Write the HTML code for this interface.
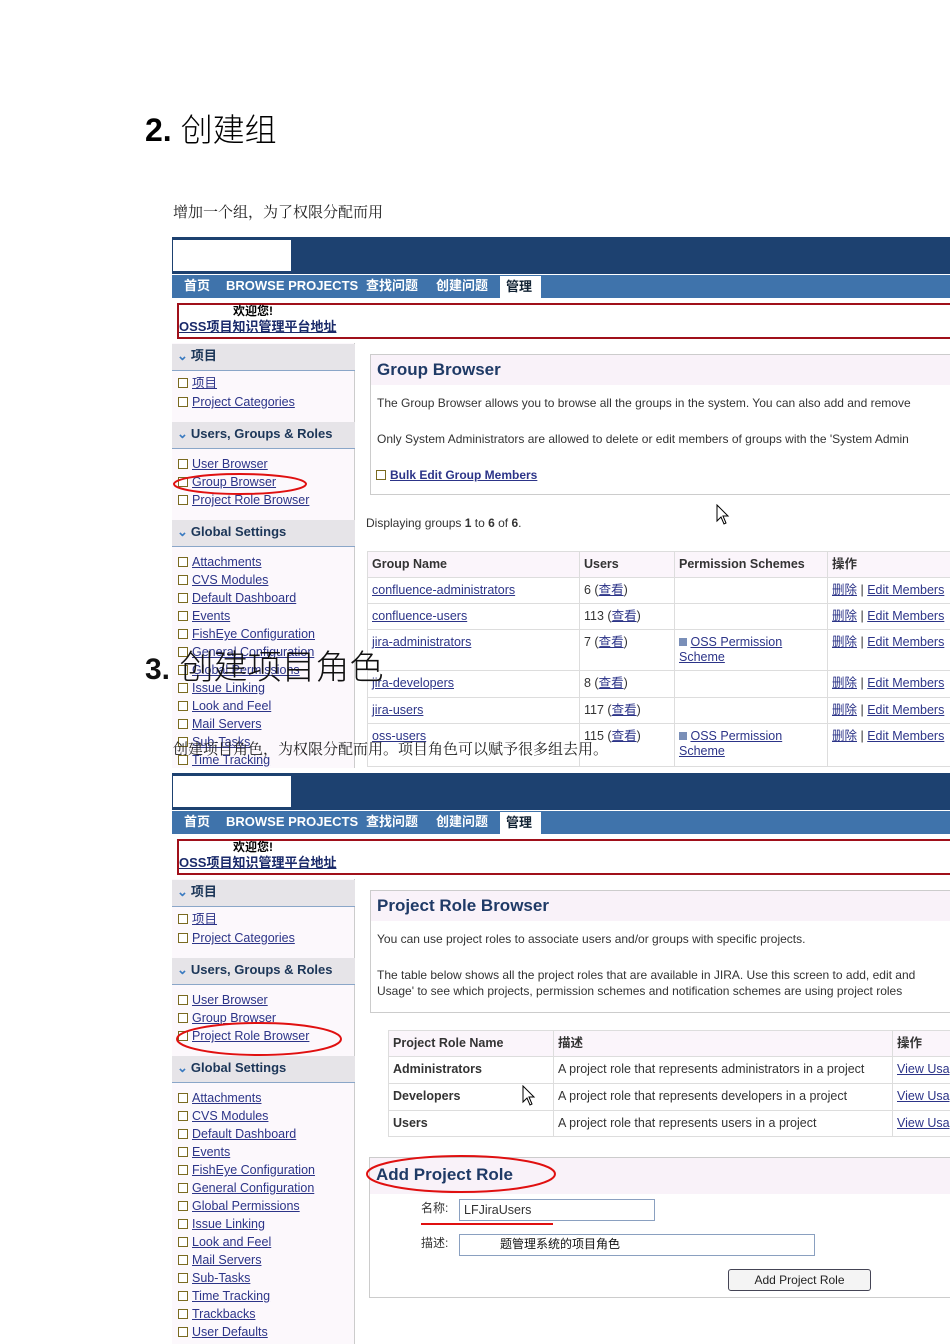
<!DOCTYPE html>
<html><head><meta charset="utf-8"><style>
*{margin:0;padding:0;box-sizing:border-box}
html,body{width:950px;height:1344px;overflow:hidden}
body{background:#fff;position:relative;font-family:"Liberation Sans","Noto Sans CJK SC",sans-serif}
.a{position:absolute;white-space:nowrap}
.shot{position:absolute;left:0;width:950px;overflow:hidden}
.top{position:absolute;left:172px;top:0;width:778px;height:37px;background:#1d4170}
.logo{position:absolute;left:173px;top:3px;width:118px;height:31px;background:#fff}
.nav{position:absolute;left:172px;top:38px;width:778px;height:23px;background:#3f73ab}
.nav span{position:absolute;top:3px;color:#fff;font-weight:bold;font-size:13px;line-height:16px}
.tab{position:absolute;left:500px;top:39px;width:41px;height:22px;background:#fff;color:#123;font-weight:bold;font-size:13px;line-height:16px;padding:3px 0 0 6px}
.red{position:absolute;left:177px;top:66px;width:780px;height:36px;border:2px solid #a0101a;background:#fff}
.side{position:absolute;left:172px;top:106px;width:183px;height:700px;background:#fcf8fc;border-right:1px solid #ccc}
.sh{position:absolute;left:172px;width:183px;height:27px;background:#e6e4e8;border-bottom:1px solid #8aa6c8;font-size:13px;line-height:16px;font-weight:bold;color:#1c3658;padding:4px 0 0 5px}
.sh:before{content:"⌄";color:#3a7ac0;margin-right:3px;font-size:13px}
.li{position:absolute;left:178px;font-size:12.5px;line-height:15px;color:#2c3488;text-decoration:underline}
.li:before{content:"";display:inline-block;width:8px;height:8px;border:1px solid #7a6a20;background:#fff;margin-right:4px;vertical-align:-1px}
.panel{position:absolute;border:1px solid #ccc;background:#fff}
.ttl{font-weight:bold;font-size:17px;color:#1f3a66}
.t{font-size:12px;color:#333}
table{position:absolute;border-collapse:collapse;font-size:12.5px;line-height:15px;color:#333}
td{border:1px solid #ddd;padding:5px 4px 0 4px;vertical-align:top}
th{border:1px solid #ddd;padding:5px 4px 0 4px;text-align:left;background:#fbf5fb;vertical-align:top}
.lk{color:#2c3488;text-decoration:underline}
.h2{font-size:34px;color:#111}
</style></head><body>

<div class="a" style="left:145px;top:108px;font-size:32px;line-height:44px"><b style="font-family:'Liberation Sans'">2.</b> <span style="font-weight:300">创建组</span></div>
<div class="a" style="left:173px;top:203px;font-size:15px;line-height:20px;font-family:'Liberation Serif','Noto Serif CJK SC',serif;color:#222">增加一个组，为了权限分配而用</div>

<!-- SHOT 1 -->
<div class="shot" style="top:237px;height:531px">
<div class="top"></div><div class="logo"></div>
<div class="nav"><span style="left:12px">首页</span><span style="left:54px">BROWSE PROJECTS</span><span style="left:194px">查找问题</span><span style="left:264px">创建问题</span></div>
<div class="tab">管理</div>
<div class="red"><div class="a" style="left:54px;top:-1px;font-size:12px;line-height:15px;font-weight:bold">欢迎您!</div><div class="a" style="left:0px;top:14px;font-size:13px;line-height:16px;font-weight:bold;color:#1a2a6a;text-decoration:underline">OSS项目知识管理平台地址</div></div>
<div class="side"></div>
<div class="sh" style="top:107px">项目</div>
<div class="li" style="top:139px">项目</div>
<div class="li" style="top:158px">Project Categories</div>
<div class="sh" style="top:185px">Users, Groups &amp; Roles</div>
<div class="li" style="top:220px">User Browser</div>
<div class="li" style="top:238px">Group Browser</div>
<div class="li" style="top:256px">Project Role Browser</div>
<div class="sh" style="top:283px">Global Settings</div>
<div class="li" style="top:318px">Attachments</div>
<div class="li" style="top:336px">CVS Modules</div>
<div class="li" style="top:354px">Default Dashboard</div>
<div class="li" style="top:372px">Events</div>
<div class="li" style="top:390px">FishEye Configuration</div>
<div class="li" style="top:408px">General Configuration</div>
<div class="li" style="top:426px">Global Permissions</div>
<div class="li" style="top:444px">Issue Linking</div>
<div class="li" style="top:462px">Look and Feel</div>
<div class="li" style="top:480px">Mail Servers</div>
<div class="li" style="top:498px">Sub-Tasks</div>
<div class="li" style="top:516px">Time Tracking</div>
<svg class="a" style="left:172px;top:234px" width="138" height="26"><ellipse cx="68" cy="13" rx="66" ry="10" fill="none" stroke="#e01010" stroke-width="2"/></svg>
<div class="panel" style="left:370px;top:117px;width:600px;height:141px">
<div style="background:#f9f2f9;height:30px;padding:5px 0 0 6px;line-height:20px" class="ttl">Group Browser</div>
<div class="a t" style="left:6px;top:41px">The Group Browser allows you to browse all the groups in the system. You can also add and remove</div>
<div class="a t" style="left:6px;top:77px">Only System Administrators are allowed to delete or edit members of groups with the 'System Admin</div>
<div class="a li" style="left:5px;top:113px;font-weight:bold;font-size:12px">Bulk Edit Group Members</div>
</div>
<div class="a t" style="left:366px;top:279px">Displaying groups <b>1</b> to <b>6</b> of <b>6</b>.</div>
<svg class="a" style="left:716px;top:267px" width="14" height="22"><path d="M1 1 L1 17 L5 13 L8 20 L10 19 L7 12 L12 12 Z" fill="#fff" stroke="#000"/></svg>
<table style="left:367px;top:314px;width:600px">
<tr style="height:26px"><th style="width:212px">Group Name</th><th style="width:95px">Users</th><th style="width:153px">Permission Schemes</th><th>操作</th></tr>
<tr style="height:26px"><td class="lk">confluence-administrators</td><td>6 (<span class="lk">查看</span>)</td><td></td><td><span class="lk">删除</span> | <span class="lk">Edit Members</span></td></tr>
<tr style="height:26px"><td class="lk">confluence-users</td><td>113 (<span class="lk">查看</span>)</td><td></td><td><span class="lk">删除</span> | <span class="lk">Edit Members</span></td></tr>
<tr style="height:41px"><td class="lk">jira-administrators</td><td>7 (<span class="lk">查看</span>)</td><td><span style="display:inline-block;width:8px;height:8px;background:#7a8fb8"></span> <span class="lk">OSS Permission<br>Scheme</span></td><td><span class="lk">删除</span> | <span class="lk">Edit Members</span></td></tr>
<tr style="height:27px"><td class="lk">jira-developers</td><td>8 (<span class="lk">查看</span>)</td><td></td><td><span class="lk">删除</span> | <span class="lk">Edit Members</span></td></tr>
<tr style="height:26px"><td class="lk">jira-users</td><td>117 (<span class="lk">查看</span>)</td><td></td><td><span class="lk">删除</span> | <span class="lk">Edit Members</span></td></tr>
<tr style="height:43px"><td class="lk">oss-users</td><td>115 (<span class="lk">查看</span>)</td><td><span style="display:inline-block;width:8px;height:8px;background:#7a8fb8"></span> <span class="lk">OSS Permission<br>Scheme</span></td><td><span class="lk">删除</span> | <span class="lk">Edit Members</span></td></tr>
</table>
</div>

<div class="a h2" style="left:145px;top:645px;line-height:46px"><b style="font-family:'Liberation Sans';font-size:30px">3.</b> <span style="font-weight:300">创建项目角色</span></div>
<div class="a" style="left:173px;top:740px;font-size:15px;line-height:20px;font-family:'Liberation Serif','Noto Serif CJK SC',serif;color:#222">创建项目角色，为权限分配而用。项目角色可以赋予很多组去用。</div>

<!-- SHOT 2 -->
<div class="shot" style="top:773px;height:571px">
<div class="top"></div><div class="logo"></div>
<div class="nav"><span style="left:12px">首页</span><span style="left:54px">BROWSE PROJECTS</span><span style="left:194px">查找问题</span><span style="left:264px">创建问题</span></div>
<div class="tab">管理</div>
<div class="red"><div class="a" style="left:54px;top:-1px;font-size:12px;line-height:15px;font-weight:bold">欢迎您!</div><div class="a" style="left:0px;top:14px;font-size:13px;line-height:16px;font-weight:bold;color:#1a2a6a;text-decoration:underline">OSS项目知识管理平台地址</div></div>
<div class="side"></div>
<div class="sh" style="top:107px">项目</div>
<div class="li" style="top:139px">项目</div>
<div class="li" style="top:158px">Project Categories</div>
<div class="sh" style="top:185px">Users, Groups &amp; Roles</div>
<div class="li" style="top:220px">User Browser</div>
<div class="li" style="top:238px">Group Browser</div>
<div class="li" style="top:256px">Project Role Browser</div>
<div class="sh" style="top:283px">Global Settings</div>
<div class="li" style="top:318px">Attachments</div>
<div class="li" style="top:336px">CVS Modules</div>
<div class="li" style="top:354px">Default Dashboard</div>
<div class="li" style="top:372px">Events</div>
<div class="li" style="top:390px">FishEye Configuration</div>
<div class="li" style="top:408px">General Configuration</div>
<div class="li" style="top:426px">Global Permissions</div>
<div class="li" style="top:444px">Issue Linking</div>
<div class="li" style="top:462px">Look and Feel</div>
<div class="li" style="top:480px">Mail Servers</div>
<div class="li" style="top:498px">Sub-Tasks</div>
<div class="li" style="top:516px">Time Tracking</div>
<div class="li" style="top:534px">Trackbacks</div>
<div class="li" style="top:552px">User Defaults</div>
<svg class="a" style="left:174px;top:247px" width="170" height="38"><ellipse cx="85" cy="19" rx="82" ry="16" fill="none" stroke="#e01010" stroke-width="2"/></svg>
<div class="panel" style="left:370px;top:117px;width:600px;height:123px">
<div style="background:#f9f2f9;height:30px;padding:5px 0 0 6px;line-height:20px" class="ttl">Project Role Browser</div>
<div class="a t" style="left:6px;top:41px">You can use project roles to associate users and/or groups with specific projects.</div>
<div class="a t" style="left:6px;top:77px">The table below shows all the project roles that are available in JIRA. Use this screen to add, edit and</div>
<div class="a t" style="left:6px;top:93px">Usage' to see which projects, permission schemes and notification schemes are using project roles</div>
</div>
<table style="left:388px;top:257px;width:600px">
<tr style="height:26px"><th style="width:165px">Project Role Name</th><th style="width:339px">描述</th><th>操作</th></tr>
<tr style="height:27px"><td><b>Administrators</b></td><td>A project role that represents administrators in a project</td><td class="lk">View Usage</td></tr>
<tr style="height:27px"><td><b>Developers</b></td><td>A project role that represents developers in a project</td><td class="lk">View Usage</td></tr>
<tr style="height:26px"><td><b>Users</b></td><td>A project role that represents users in a project</td><td class="lk">View Usage</td></tr>
</table>
<svg class="a" style="left:522px;top:312px" width="14" height="22"><path d="M1 1 L1 17 L5 13 L8 20 L10 19 L7 12 L12 12 Z" fill="#fff" stroke="#000"/></svg>
<div class="panel" style="left:369px;top:384px;width:600px;height:141px;background:#fff">
<div style="background:#f9f2f9;height:36px;padding:7px 0 0 6px;line-height:20px" class="ttl">Add Project Role</div>
<div class="a t" style="left:51px;top:41px;font-size:12px">名称:</div>
<div class="a" style="left:89px;top:41px;width:196px;height:22px;border:1px solid #8aa0c0;font-size:12.5px;line-height:15px;padding:3px 4px;color:#333">LFJiraUsers</div>
<div class="a" style="left:51px;top:65px;width:132px;height:2px;background:#e01010"></div>
<div class="a t" style="left:51px;top:76px">描述:</div>
<div class="a" style="left:89px;top:76px;width:356px;height:22px;border:1px solid #8aa0c0;font-size:12px;line-height:15px;padding:2px 4px 0 40px;color:#111">题管理系统的项目角色</div>
<div class="a" style="left:358px;top:111px;width:143px;height:22px;border:1px solid #445;border-radius:3px;background:#f4f4f4;font-size:12px;line-height:15px;text-align:center;padding-top:3px;color:#222">Add Project Role</div>
</div>
<svg class="a" style="left:363px;top:380px" width="200" height="46"><ellipse cx="98" cy="21" rx="94" ry="18" fill="none" stroke="#e01010" stroke-width="2"/></svg>
</div>
</body></html>
